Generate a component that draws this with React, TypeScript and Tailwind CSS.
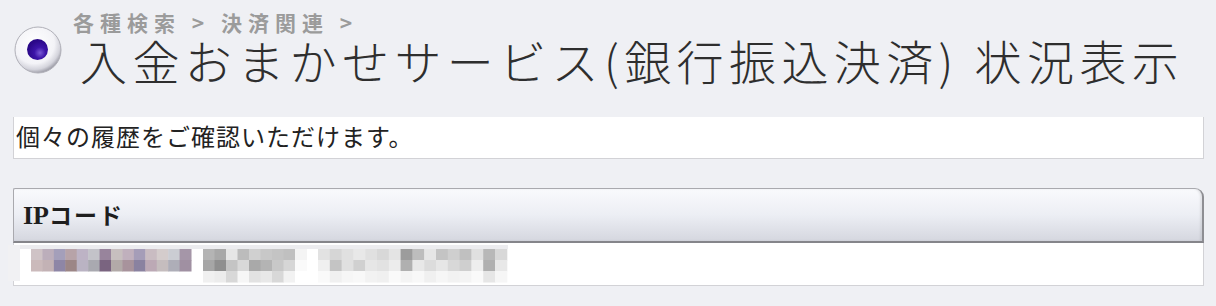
// 入金おまかせサービス 状況表示

const jp = "font-['Noto_Sans_CJK_JP','Noto_Sans',sans-serif]"

// モザイク(ぼかし)部分の色
const group1 = [
  ['#cfc3c6', '#bcaebb', '#a49fba', '#b7a3a8', '#bdb3c5', '#c3c3c9', '#98849c', '#c7bfbf', '#c0b0bd', '#a59db8', '#c9bcc2', '#d4cccc', '#cbcdd3', '#a596a8'],
  ['#cbbabb', '#c3b2b5', '#8e86a6', '#9c8686', '#bab3c3', '#a9a9b0', '#7a6480', '#b2aaa8', '#a8939c', '#8a82a0', '#bca9b5', '#c5bdbe', '#aeaeb8', '#a090a2'],
]
const group2 = [
  ['#b4b4b4', '#a8a8a8', '#e6e6e6', '#bcbcbc', '#d0d0d0', '#c8c8c8', '#c4c4c4', '#c0c0c0', '#f4f4f4'],
  ['#a6a6a6', '#8f8f8f', '#c4c4c4', '#d8d8d8', '#a9a9a9', '#b4b4b4', '#c8c8c8', '#d6d6d6', '#fafafa'],
  ['#f0f0f0', '#ececec', '#d8d8d8', '#f6f6f6', '#e2e2e2', '#e8e8e8', '#d8d8d8', '#f2f2f2', '#ffffff'],
]
const group3 = [
  ['#e2e2e2', '#d6d6d6', '#e0e0e0', '#e8e8e8', '#e0e0e0', '#d8d8d8', '#e4e4e4', '#9c9c9c', '#bdbdbd', '#e6e6e6', '#c4c4c4', '#cfcfcf', '#c0c0c0', '#e0e0e0', '#b8b8b8', '#d8d8d8'],
  ['#f0f0f0', '#c4c4c4', '#e0e0e0', '#d0d0d0', '#e6e6e6', '#e2e2e2', '#ececec', '#b0b0b0', '#e8e8e8', '#dcdcdc', '#e6e6e6', '#d8d8d8', '#cfcfcf', '#eeeeee', '#b0b0b0', '#e8e8e8'],
  ['#fafafa', '#f0f0f0', '#f6f6f6', '#f8f8f8', '#f2f2f2', '#f0f0f0', '#fafafa', '#f4f4f4', '#f8f8f8', '#f0f0f0', '#f6f6f6', '#f2f2f2', '#f4f4f4', '#fafafa', '#e6e6e6', '#f6f6f6'],
]

function Blocks({ rows, x, w, h }: { rows: string[][]; x: number; w: number; h: number }) {
  return (
    <>
      {rows.map((row, r) =>
        row.map((c, i) => (
          <rect key={`${r}-${i}`} x={x + i * w} y={4 + r * h} width={w + 0.5} height={h + 0.5} fill={c} />
        ))
      )}
    </>
  )
}

function Mosaic() {
  return (
    <svg width="502" height="38" viewBox="0 0 502 38" className="absolute left-[-6px] top-[2px]">
      <rect x="0" y="0" width="500" height="4" fill="#ececef" />
      <rect x="0" y="0" width="12" height="36" fill="#f1f1f3" />
      <Blocks rows={group1} x={23} w={11.43} h={11} />
      <Blocks rows={group2} x={195} w={11.5} h={11} />
      <Blocks rows={group3} x={310} w={11.8} h={11} />
    </svg>
  )
}

function RadioIcon() {
  return (
    <svg width="48" height="48" viewBox="0 0 48 48" className="shrink-0">
      <defs>
        <radialGradient id="ring" cx="0.42" cy="0.36" r="0.64">
          <stop offset="0" stopColor="#ffffff" />
          <stop offset="0.68" stopColor="#f3f3f7" />
          <stop offset="0.88" stopColor="#d4d4dc" />
          <stop offset="1" stopColor="#a2a2ac" />
        </radialGradient>
        <radialGradient id="dot" cx="0.62" cy="0.66" r="0.6">
          <stop offset="0" stopColor="#7a5ad6" />
          <stop offset="0.45" stopColor="#3c14a8" />
          <stop offset="1" stopColor="#2a0888" />
        </radialGradient>
      </defs>
      <circle cx="24" cy="24" r="23" fill="url(#ring)" stroke="#b0b0b8" strokeWidth="1" />
      <circle cx="23.5" cy="23.5" r="10.5" fill="url(#dot)" />
    </svg>
  )
}

export default function App() {
  return (
    <div className={`w-[1216px] h-[306px] bg-[#eff0f4] overflow-hidden ${jp}`}>
      {/* 見出し */}
      <div className="flex h-[117px] pl-[14px] pt-[10px]">
        <div className="mt-[16px]">
          <RadioIcon />
        </div>
        <div className="ml-[11px]">
          <div className="h-[24px] text-[21px] leading-[24px] font-bold tracking-[6px] text-[#9b9b9b] whitespace-nowrap">
            各種検索 &gt; 決済関連 &gt;
          </div>
          <h1 className="ml-[7px] text-[47px] leading-[52px] font-light tracking-[5.4px] text-[#2e2e2e] whitespace-nowrap">
            入金おまかせサービス(銀行振込決済) 状況表示
          </h1>
        </div>
      </div>

      <div className="pl-[13px] pr-[12px]">
        {/* 説明 */}
        <div className="flex items-center h-[42px] pl-[2px] pb-[3px] bg-white border-x border-b border-[#d2d2d6]">
          <p className="text-[24px] leading-[30px] tracking-[1px] text-[#222]">個々の履歴をご確認いただけます。</p>
        </div>

        {/* 項目ヘッダー */}
        <div className="mt-[29px] flex items-center h-[55px] pl-[9px] bg-gradient-to-b from-[#f9fafd] via-[#eceef4] to-[#d5d7df] border-t border-l border-[#a9a9ae] border-r-2 border-r-[#8e8e93] border-b-2 border-b-[#85858a] rounded-tr-[9px] rounded-tl-[2px] shadow-[inset_-2px_0_2px_rgba(0,0,0,0.08)]">
          <span className="flex items-baseline font-bold text-[#1e1e1e]">
            <span className="text-[26px] font-['Liberation_Serif',serif]">IP</span>
            <span className="text-[23px] tracking-[2px]">コード</span>
          </span>
        </div>

        {/* 値 */}
        <div className="relative h-[43px] bg-white border-x border-b border-[#d2d2d6]">
          <Mosaic />
        </div>
      </div>
    </div>
  )
}
